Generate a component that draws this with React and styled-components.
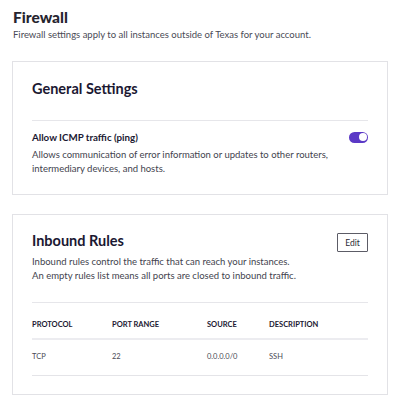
import React from "react";
import styled, { createGlobalStyle } from "styled-components";

const Global = createGlobalStyle`
  html, body { margin: 0; padding: 0; background: #fff; }
  body { font-family: Lato, "Noto Sans", sans-serif; color: #3a3a44; }
  * { box-sizing: border-box; }
`;

const Page = styled.div`
  width: 400px;
  padding: 7px 12px 0 12px;
`;

const PageTitle = styled.h1`
  margin: 0 0 0 1px;
  font-size: 15.5px;
  line-height: 20px;
  font-weight: 900;
  color: #26252f;
`;

const PageSub = styled.p`
  margin: 1px 0 19px 1px;
  font-size: 9.5px;
  line-height: 14px;
  color: #4a4a55;
`;

const Card = styled.section`
  border: 1px solid #e2e2e6;
  padding: ${(p) => p.$pt}px 19px 18px 19px;
  margin-bottom: 19px;
`;

const CardTitle = styled.h2`
  margin: 0;
  font-size: 14.5px;
  line-height: 20px;
  font-weight: 700;
  color: #1b1832;
`;

const Divider = styled.div`
  height: 1px;
  background: #e6e6ea;
  margin-top: ${(p) => p.$mt || 0}px;
`;

const SettingRow = styled.div`
  display: flex;
  justify-content: space-between;
  align-items: center;
  padding-top: 9px;
`;

const SettingLabel = styled.div`
  font-size: 9.75px;
  line-height: 14px;
  font-weight: 700;
  color: #1b1832;
`;

const Toggle = styled.div`
  width: 19px;
  height: 11px;
  border-radius: 6px;
  background: #5b39c6;
  position: relative;
  &::after {
    content: "";
    position: absolute;
    right: 1.5px;
    top: 1.5px;
    width: 8px;
    height: 8px;
    border-radius: 50%;
    background: #fff;
  }
`;

const Desc = styled.p`
  margin: ${(p) => p.$mt || 0}px 0 0 0;
  font-size: 9.5px;
  line-height: 14px;
  color: #43434e;
`;

const HeadRow = styled.div`
  display: flex;
  justify-content: space-between;
  align-items: flex-start;
`;

const EditButton = styled.button`
  margin-top: 2px;
  width: 31px;
  height: 19px;
  border: 1px solid #5c5c66;
  border-radius: 1px;
  background: #fff;
  font-family: Lato, "Noto Sans", sans-serif;
  font-size: 8.5px;
  color: #2b2b35;
  padding: 0;
`;

const Grid = styled.div`
  display: grid;
  grid-template-columns: 80px 95px 62px 1fr;
  align-items: center;
  font-size: 7.5px;
  line-height: 12px;
  padding: ${(p) => p.$pad};
  border-bottom: ${(p) => (p.$head ? "2px solid #ececf0" : "1px solid #e4e4e8")};
  font-weight: ${(p) => (p.$head ? 700 : 400)};
  color: ${(p) => (p.$head ? "#1b1832" : "#4a4a55")};
`;

export default function App() {
  return (
    <Page>
      <Global />
      <PageTitle>Firewall</PageTitle>
      <PageSub>Firewall settings apply to all instances outside of Texas for your account.</PageSub>

      <Card $pt={17}>
        <CardTitle>General Settings</CardTitle>
        <Divider $mt={21} />
        <SettingRow>
          <SettingLabel>Allow ICMP traffic (ping)</SettingLabel>
          <Toggle />
        </SettingRow>
        <Desc $mt={4}>
          Allows communication of error information or updates to other routers,
          intermediary devices, and hosts.
        </Desc>
      </Card>

      <Card $pt={16}>
        <HeadRow>
          <CardTitle>Inbound Rules</CardTitle>
          <EditButton>Edit</EditButton>
        </HeadRow>
        <Desc $mt={3}>
          Inbound rules control the traffic that can reach your instances.
          <br />
          An empty rules list means all ports are closed to inbound traffic.
        </Desc>
        <Divider $mt={19} />
        <Grid $head $pad="16px 0 7px 0">
          <span>PROTOCOL</span>
          <span>PORT RANGE</span>
          <span>SOURCE</span>
          <span>DESCRIPTION</span>
        </Grid>
        <Grid $pad="11px 0 12px 0">
          <span>TCP</span>
          <span>22</span>
          <span>0.0.0.0/0</span>
          <span>SSH</span>
        </Grid>
      </Card>
    </Page>
  );
}
